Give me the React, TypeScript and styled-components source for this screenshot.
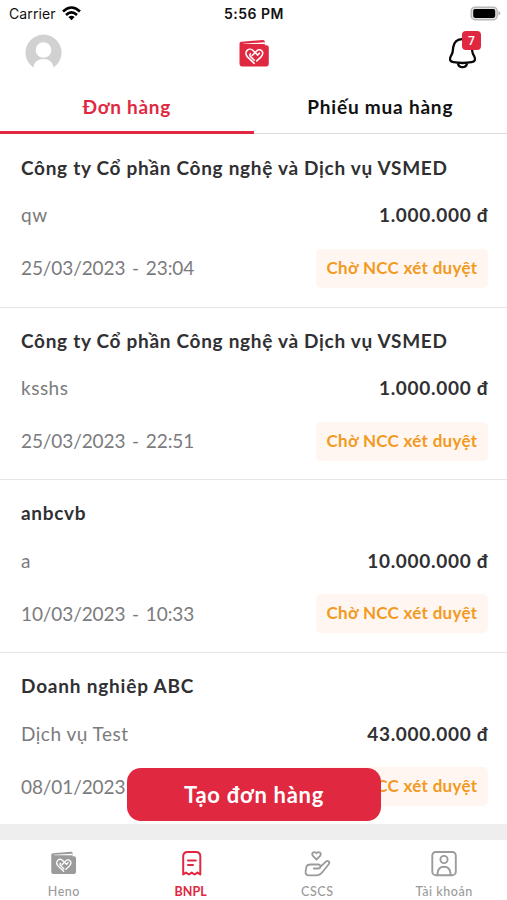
import React from "react";
import styled, { createGlobalStyle } from "styled-components";

const RED = "#e02840";
const GREY = "#9b9b9b";

const GlobalStyle = createGlobalStyle`
  * { box-sizing: border-box; }
  html, body { margin: 0; padding: 0; background: #fff; }
  body { font-family: Lato, "Noto Sans", sans-serif; color: #303033; overflow: hidden; }
  button { font: inherit; border: 0; background: none; padding: 0; }
`;

const Screen = styled.div`
  position: relative;
  width: 507px;
  height: 900px;
  display: flex;
  flex-direction: column;
  overflow: hidden;
  background: #fff;
`;

const StatusBar = styled.div`
  height: 28px;
  flex: none;
  display: grid;
  grid-template-columns: 1fr auto 1fr;
  align-items: center;
  padding: 0 6px 0 9px;
  font-family: Inter, sans-serif;
  font-size: 14px;
  line-height: 28px;
  color: #111;
`;
const Carrier = styled.div`
  display: flex;
  align-items: center;
  gap: 6px;
  letter-spacing: 0.12px;
  svg { margin-top: -2px; }
`;
const Clock = styled.div`
  font-weight: 600;
  font-size: 14px;
  letter-spacing: 0.5px;
  margin-right: 2px;
`;
const Battery = styled.div`
  display: flex;
  justify-content: flex-end;
  margin-top: -2px;
`;

const TopBar = styled.header`
  height: 52px;
  flex: none;
  display: grid;
  grid-template-columns: 1fr auto 1fr;
  align-items: center;
  padding: 0 25px;
`;
const Avatar = styled.div`
  width: 37px;
  height: 37px;
  margin-top: -4px;
  svg { display: block; }
`;
const Brand = styled.div`
  margin-top: -1px;
  svg { display: block; }
`;
const Bell = styled.div`
  position: relative;
  justify-self: end;
  width: 34px;
  height: 40px;
  svg { display: block; }
`;
const Count = styled.span`
  position: absolute;
  top: -3px;
  right: 1px;
  width: 19px;
  height: 19px;
  border-radius: 4px;
  background: ${RED};
  color: #fff;
  font-family: "Open Sans", sans-serif;
  font-size: 12px;
  font-weight: 600;
  line-height: 19px;
  text-align: center;
`;

const Tabs = styled.nav`
  height: 54px;
  flex: none;
  display: grid;
  grid-template-columns: 1fr 1fr;
  border-bottom: 1px solid #dcdcdc;
`;
const Tab = styled.button<{ $active?: boolean; $spacing: number }>`
  height: 54px;
  padding-bottom: 1px;
  font-size: 19px;
  font-weight: 700;
  letter-spacing: ${(p) => p.$spacing}px;
  color: ${(p) => (p.$active ? RED : "#111")};
  box-shadow: ${(p) => (p.$active ? `inset 0 -3px ${RED}` : "none")};
`;

const List = styled.main`
  flex: none;
  height: 690px;
  padding-top: 0.75px;
  overflow: hidden;
`;
const Order = styled.article`
  height: 172.75px;
  padding: 19px 19px 0 21px;
  border-bottom: 1px solid #e6e6e6;
`;
const Title = styled.h2<{ $spacing: number }>`
  margin: 0;
  height: 28px;
  font-size: 19px;
  line-height: 28px;
  font-weight: 700;
  white-space: nowrap;
  letter-spacing: ${(p) => p.$spacing}px;
`;
const Line = styled.div<{ $top: number; $height: number }>`
  margin-top: ${(p) => p.$top}px;
  height: ${(p) => p.$height}px;
  display: flex;
  align-items: center;
  justify-content: space-between;
`;
const Muted = styled.span<{ $spacing: number; $word?: number }>`
  font-size: 19px;
  color: #7b7b7d;
  letter-spacing: ${(p) => p.$spacing}px;
  word-spacing: ${(p) => p.$word ?? 0}px;
`;
const When = styled(Muted)`
  margin-top: -1px;
`;
const Amount = styled.span`
  font-size: 19px;
  font-weight: 700;
  letter-spacing: 0.7px;
  margin-right: -0.2px;
`;
const Status = styled.span`
  width: 172px;
  height: 39px;
  border-radius: 5px;
  background: #fff6f1;
  color: #f29a1f;
  font-size: 17px;
  font-weight: 700;
  line-height: 38px;
  text-align: center;
  letter-spacing: 0.3px;
`;

const CreateButton = styled.button`
  position: absolute;
  left: 127px;
  top: 768px;
  width: 254px;
  height: 53px;
  border-radius: 14px;
  background: ${RED};
  color: #fff;
  font-size: 22px;
  font-weight: 700;
  letter-spacing: 0.7px;
`;

const Divider = styled.div`
  flex: none;
  height: 16px;
  background: #eee;
`;
const BottomNav = styled.nav`
  flex: 1;
  display: grid;
  grid-template-columns: repeat(4, 1fr);
  padding-top: 8px;
`;
const NavItem = styled.div<{ $active?: boolean; $spacing: number }>`
  display: flex;
  flex-direction: column;
  align-items: center;
  gap: 6px;
  padding-left: 1px;
  font-size: 12.5px;
  line-height: 16px;
  font-weight: ${(p) => (p.$active ? 700 : 500)};
  letter-spacing: ${(p) => p.$spacing}px;
  color: ${(p) => (p.$active ? RED : GREY)};
  svg { display: block; }
`;
const NavIcon = styled.span`
  width: 30px;
  height: 30px;
  display: flex;
  align-items: center;
  justify-content: center;
`;

const WalletIcon = ({ size, color }: { size: number; color: string }) => (
  <svg width={size} height={size} viewBox="0 0 32 32" fill="none">
    <path d="M1.5 5.5Q1.5 4 3.5 3.8L24.5 2Q26.8 1.8 26.8 3.5V7.3H28.5Q30.8 7.3 30.8 9.5V26Q30.8 28.4 28.5 28.4H3.8Q1.5 28.4 1.5 26Z" fill={color} />
    <path d="M5 5.7 26.8 4.3V6.1H5.5Q4.2 6.1 5 5.7Z" fill="#fff" />
    <g stroke="#fff" strokeWidth="1.6" strokeLinecap="round" strokeLinejoin="round">
      <path d="M16.2 25.3 9.7 19.1C7.5 16.9 7.4 14 9.2 12.3S13.6 11 15.3 12.7L19.6 17" />
      <path d="M16.3 22.2 12.2 18.2Q11.2 17 12.4 15.8" />
      <path d="M14.2 17.5 18.4 13.2C19.8 11.4 22.2 11.2 23.7 12.7S24.9 16.8 22.8 19.1L18.8 22.9" />
      <path d="M19.6 17 21.4 15.2" />
    </g>
  </svg>
);

const WifiIcon = () => (
  <svg width="19" height="15" viewBox="0 0 19 15">
    <g fill="none" stroke="#000" strokeWidth="2.6">
      <path d="M1 5.5Q9.5-2.5 18 5.5" />
      <path d="M4 9Q9.5 3.6 15 9" />
    </g>
    <path d="M6.4 11Q9.5 8.4 12.6 11L9.5 14.3Z" fill="#000" />
  </svg>
);

const BatteryIcon = () => (
  <svg width="31" height="15" viewBox="0 0 31 15">
    <rect x="1.2" y="1.2" width="26" height="12.5" rx="3.8" fill="#e2e2e2" stroke="#b8b8b8" strokeWidth="1.4" />
    <rect x="3.2" y="3.1" width="22" height="8.8" rx="1.8" fill="#000" />
    <path d="M28.5 5Q32 7.2 28.5 9.5Z" fill="#aaa" />
  </svg>
);

const AvatarIcon = () => (
  <svg width="37" height="37" viewBox="0 0 37 37">
    <path d="M8.5 33.5A18 18 0 1 1 28.5 33.5C28 28 24 25 18.5 25S9 28 8.5 33.5Z" fill="#d1d1d1" />
    <circle cx="18.5" cy="16" r="7.8" fill="#fff" />
  </svg>
);

const BellIcon = () => (
  <svg width="34" height="40" viewBox="0 0 34 40" fill="none" stroke="#080808" strokeWidth="2.3" strokeLinejoin="round">
    <path d="M14.5 5.2C9 5.2 6 8.6 5.2 13.2L4.7 17.5Q4.5 19.5 3 21.8C.9 25.6 2.1 27.6 5.5 28.2Q14.5 29.8 23.5 28.2C26.9 27.6 28.1 25.6 26 21.8Q24.5 19.5 24.3 17.5L23.8 13.2C23 8.6 20 5.2 14.5 5.2Z" />
    <path d="M9.8 29.2Q10.8 33.2 14.5 33.2T19.2 29.2" />
  </svg>
);

const ReceiptIcon = () => (
  <svg width="30" height="30" viewBox="0 0 30 30" fill="none" stroke={RED} strokeWidth="2" strokeLinecap="round" strokeLinejoin="round">
    <path d="M7.2 26.5V8.5Q7.2 4 11.5 4H20Q24.3 4 24.3 8.5V26.5L21.4 24.6 18.6 26.5 15.7 24.6 12.9 26.5 10 24.6Z" />
    <path d="M12 12.5H19.8M12 17H17" />
  </svg>
);

const CareIcon = () => (
  <svg width="30" height="30" viewBox="0 0 30 30" fill="none" stroke={GREY} strokeWidth="1.8" strokeLinecap="round" strokeLinejoin="round">
    <path d="M14.5 11.5 10.9 7.9C9 5.3 12.2 2.4 14.5 5.3 16.8 2.4 20 5.3 18.1 7.9Z" />
    <path d="M11.8 20.5H16Q18.4 20.4 18.4 18.4T16 16.5H8.5Q5 16.5 4.4 18.8L3.6 23.5Q3.2 27.3 7 27.3H15Q17.7 27.3 19.5 25.2L26.7 16.3Q28 14.3 26.5 13.3T23.6 13.8L18.2 19" />
  </svg>
);

const AccountIcon = () => (
  <svg width="30" height="30" viewBox="0 0 30 30" fill="none" stroke={GREY} strokeWidth="1.9">
    <rect x="3.3" y="4" width="23.5" height="23.2" rx="3.5" />
    <circle cx="15" cy="11.5" r="3.6" />
    <path d="M8.5 27V25.5Q9 18.7 15 18.7T21.5 25.5V27" />
  </svg>
);

type OrderData = { title: string; note: string; amount: string; date: string; spacing: number };

const orders: OrderData[] = [
  { title: "Công ty Cổ phần Công nghệ và Dịch vụ VSMED", note: "qw", amount: "1.000.000 đ", date: "25/03/2023 - 23:04", spacing: 0.7 },
  { title: "Công ty Cổ phần Công nghệ và Dịch vụ VSMED", note: "ksshs", amount: "1.000.000 đ", date: "25/03/2023 - 22:51", spacing: 0.7 },
  { title: "anbcvb", note: "a", amount: "10.000.000 đ", date: "10/03/2023 - 10:33", spacing: 0.7 },
  { title: "Doanh nghiêp ABC", note: "Dịch vụ Test", amount: "43.000.000 đ", date: "08/01/2023 - 10:21", spacing: 0.8 },
];

export default function App() {
  return (
    <>
      <GlobalStyle />
      <Screen>
        <StatusBar>
          <Carrier>Carrier <WifiIcon /></Carrier>
          <Clock>5:56 PM</Clock>
          <Battery><BatteryIcon /></Battery>
        </StatusBar>
        <TopBar>
          <Avatar><AvatarIcon /></Avatar>
          <Brand><WalletIcon size={32} color={RED} /></Brand>
          <Bell><BellIcon /><Count>7</Count></Bell>
        </TopBar>
        <Tabs>
          <Tab $active $spacing={0.7}>Đơn hàng</Tab>
          <Tab $spacing={0.8}>Phiếu mua hàng</Tab>
        </Tabs>
        <List>
          {orders.map((o, i) => (
            <Order key={i}>
              <Title $spacing={o.spacing}>{o.title}</Title>
              <Line $top={19} $height={28}>
                <Muted $spacing={0.5}>{o.note}</Muted>
                <Amount>{o.amount}</Amount>
              </Line>
              <Line $top={20} $height={39}>
                <When $spacing={-0.1} $word={2}>{o.date}</When>
                <Status>Chờ NCC xét duyệt</Status>
              </Line>
            </Order>
          ))}
        </List>
        <Divider />
        <BottomNav>
          <NavItem $spacing={0.5}><NavIcon><WalletIcon size={27} color={GREY} /></NavIcon>Heno</NavItem>
          <NavItem $active $spacing={0}><NavIcon><ReceiptIcon /></NavIcon>BNPL</NavItem>
          <NavItem $spacing={0.6}><NavIcon><CareIcon /></NavIcon>CSCS</NavItem>
          <NavItem $spacing={0.55}><NavIcon><AccountIcon /></NavIcon>Tài khoản</NavItem>
        </BottomNav>
        <CreateButton>Tạo đơn hàng</CreateButton>
      </Screen>
    </>
  );
}
